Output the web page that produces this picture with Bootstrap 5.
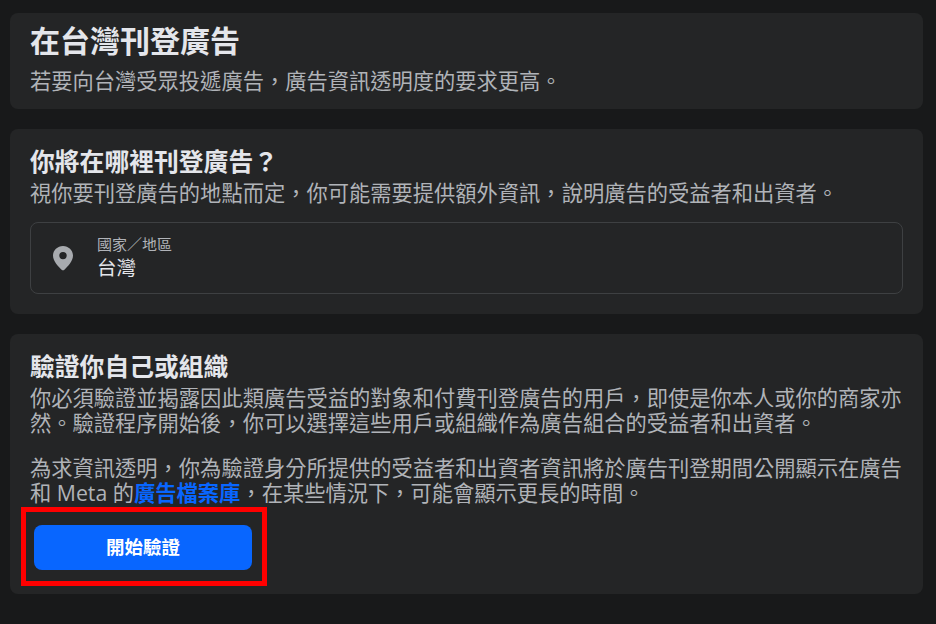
<!DOCTYPE html>
<html lang="zh-Hant">
<head>
<meta charset="utf-8">
<title>在台灣刊登廣告</title>
<link rel="stylesheet" href="https://cdn.jsdelivr.net/npm/bootstrap@5.3.0/dist/css/bootstrap.min.css">
<style>
html,body{height:100%}
body{background:#18191a;font-family:"Open Sans","Noto Sans CJK TC",sans-serif;color:#b0b3b8;overflow:hidden}
.page-wrap{padding:13px 13px 0 10px;gap:20px}
.panel{background:#242526;border-radius:8px;padding:0 20px}
.panel-a{height:96px;padding-top:12px}
.panel-b{height:185px;padding-top:17px}
.panel-c{height:260px;padding-top:17px}
.h-a{font-size:30px;line-height:32px;font-weight:700;color:#e4e6eb;margin:0 0 11px}
.h-b,.h-c{font-size:24.8px;line-height:30px;font-weight:700;color:#e4e6eb;margin:0}
.h-b{margin-bottom:4px}
.h-c{margin-bottom:4px}
.txt{font-size:21.27px;line-height:25px;margin:0;white-space:nowrap}
.txt-gap{margin-top:20px}
.loc{height:72px;margin-top:17px;border:1px solid #3e4042;border-radius:8px;padding-left:21px;gap:23px}
.loc-lbl{font-size:15px;line-height:18px;color:#b0b3b8}
.loc-val{font-size:19.5px;line-height:26px;color:#e4e6eb;margin-top:2px}
.blue-link{color:#0866ff;font-weight:700;text-decoration:none}
.mark-wrap{position:relative;width:218px;height:45px;margin:20px 0 0 4px}
.go-btn{width:218px;height:45px;background:#0866ff;border:0;border-radius:8px;color:#fff;font-size:18.5px;font-weight:700;padding:0 0 2px}
.go-btn:hover{background:#0866ff;color:#fff}
.red-box{position:absolute;left:-13px;top:-18px;width:246px;height:79px;border:5px solid #f00;pointer-events:none}
</style>
</head>
<body>
<div class="page-wrap d-flex flex-column">
  <section class="panel panel-a">
    <h1 class="h-a">在台灣刊登廣告</h1>
    <p class="txt">若要向台灣受眾投遞廣告，廣告資訊透明度的要求更高。</p>
  </section>
  <section class="panel panel-b">
    <h2 class="h-b">你將在哪裡刊登廣告？</h2>
    <p class="txt">視你要刊登廣告的地點而定，你可能需要提供額外資訊，說明廣告的受益者和出資者。</p>
    <div class="loc d-flex align-items-center">
      <svg width="22" height="26" viewBox="0 0 22 26" aria-hidden="true"><path fill="#a8abaf" fill-rule="evenodd" d="M11 1C5.500 1 1 5.300 1 10.600c0 5.800 5.600 11.500 8.600 14.100.8.700 2 .7 2.800 0 3-2.600 8.600-8.300 8.600-14.100C21 5.300 16.500 1 11 1Zm0 13.300a3.700 3.700 0 1 1 0-7.400 3.700 3.700 0 0 1 0 7.400Z"/></svg>
      <div>
        <div class="loc-lbl">國家／地區</div>
        <div class="loc-val">台灣</div>
      </div>
    </div>
  </section>
  <section class="panel panel-c">
    <h2 class="h-c">驗證你自己或組織</h2>
    <p class="txt">你必須驗證並揭露因此類廣告受益的對象和付費刊登廣告的用戶，即使是你本人或你的商家亦<br>然。驗證程序開始後，你可以選擇這些用戶或組織作為廣告組合的受益者和出資者。</p>
    <p class="txt txt-gap">為求資訊透明，你為驗證身分所提供的受益者和出資者資訊將於廣告刊登期間公開顯示在廣告<br>和 Meta 的<a class="blue-link" href="#">廣告檔案庫</a>，在某些情況下，可能會顯示更長的時間。</p>
    <div class="mark-wrap">
      <button type="button" class="btn go-btn">開始驗證</button>
      <div class="red-box"></div>
    </div>
  </section>
</div>
<script src="https://cdn.jsdelivr.net/npm/bootstrap@5.3.0/dist/js/bootstrap.bundle.min.js"></script>
</body>
</html>
